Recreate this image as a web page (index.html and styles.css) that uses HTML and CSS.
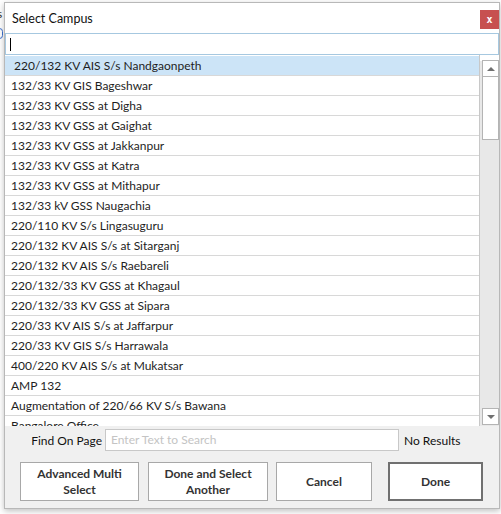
FILE: index.html
```html
<!DOCTYPE html>
<html>
<head>
<meta charset="utf-8">
<link rel="stylesheet" href="styles.css">
</head>
<body>
<div class="behind">
  <span class="behind-s">s</span>
  <span class="behind-c"></span>
</div>
<div class="dialog">
  <div class="titlebar">
    <span class="title">Select Campus</span>
    <button class="close">x</button>
  </div>
  <div class="search"><span class="caret"></span></div>
  <div class="list">
    <div class="rows">
      <div class="row selected">&nbsp;220/132 KV AIS S/s Nandgaonpeth</div>
      <div class="row">132/33 KV GIS Bageshwar</div>
      <div class="row">132/33 KV GSS at Digha</div>
      <div class="row">132/33 KV GSS at Gaighat</div>
      <div class="row">132/33 KV GSS at Jakkanpur</div>
      <div class="row">132/33 KV GSS at Katra</div>
      <div class="row">132/33 KV GSS at Mithapur</div>
      <div class="row">132/33 kV GSS Naugachia</div>
      <div class="row">220/110 KV S/s Lingasuguru</div>
      <div class="row">220/132 KV AIS S/s at Sitarganj</div>
      <div class="row">220/132 KV AIS S/s Raebareli</div>
      <div class="row">220/132/33 KV GSS at Khagaul</div>
      <div class="row">220/132/33 KV GSS at Sipara</div>
      <div class="row">220/33 KV AIS S/s at Jaffarpur</div>
      <div class="row">220/33 KV GIS S/s Harrawala</div>
      <div class="row">400/220 KV AIS S/s at Mukatsar</div>
      <div class="row">AMP 132</div>
      <div class="row">Augmentation of 220/66 KV S/s Bawana</div>
      <div class="row">Bangalore Office</div>
    </div>
    <div class="scrollbar">
      <div class="sb-btn"><span class="tri-up"></span></div>
      <div class="sb-track"><div class="sb-thumb"></div></div>
      <div class="sb-btn"><span class="tri-down"></span></div>
    </div>
  </div>
  <div class="footer">
    <div class="find">
      <span class="find-label">Find On Page</span>
      <div class="find-input">Enter Text to Search</div>
      <span class="find-result">No Results</span>
    </div>
    <div class="buttons">
      <button class="btn b1">Advanced Multi<br>Select</button>
      <button class="btn b2">Done and Select<br>Another</button>
      <button class="btn b3">Cancel</button>
      <button class="btn b4 primary">Done</button>
    </div>
  </div>
</div>
</body>
</html>
```
FILE: styles.css
```css
* { box-sizing: border-box; }
html, body { margin: 0; padding: 0; }
body {
  width: 501px;
  height: 514px;
  background: #ffffff;
  font-family: "Segoe UI", Lato, "Noto Sans", sans-serif;
  font-size: 12px;
  color: #1e1e1e;
  position: relative;
  overflow: hidden;
  padding: 2px 0 0 4px;
}
.behind { position: absolute; left: 0; top: 0; width: 5px; height: 514px; }
.behind-s { position: absolute; left: -3px; top: 6px; font-size: 12px; color: #333; }
.behind-c { position: absolute; left: -4px; top: 28px; width: 7px; height: 11px; border: 1px solid #3a6fd0; border-radius: 4px; }
.dialog {
  position: relative;
  width: 496px;
  height: 507px;
  border: 1px solid #b8b8b8;
  background: #fff;
  box-shadow: 0 2px 6px rgba(0,0,0,0.25);
  display: flex;
  flex-direction: column;
}
.titlebar {
  height: 30px;
  display: flex;
  justify-content: space-between;
  align-items: flex-start;
  padding-left: 7px;
}
.title {
  font-size: 12.5px;
  color: #111;
  margin-top: 8px;
}
.close {
  width: 19px;
  height: 19px;
  margin-top: 7px;
  margin-right: 0;
  border: none;
  background: #c75050;
  color: #fff;
  font-family: "DejaVu Sans Mono", monospace;
  font-weight: bold;
  font-size: 10px;
  line-height: 17px;
  padding: 0;
  text-align: center;
}
.search {
  height: 22px;
  border: 1px solid #a6c8e0;
  background: #fff;
  display: flex;
  align-items: center;
  padding-left: 4px;
}
.caret { width: 1px; height: 13px; background: #000; }
.list {
  height: 371px;
  display: flex;
  background: #fff;
  overflow: hidden;
}
.rows {
  width: 475px;
  border-right: 1px solid #c8c8c8;
  padding-top: 1px;
  overflow: hidden;
}
.row {
  height: 20px;
  border-bottom: 1px solid #d8d8d8;
  padding-left: 6px;
  line-height: 19px;
  white-space: pre;
  color: #1e1e1e;
}
.row.selected { background: #cce4f7; }
.scrollbar {
  width: 19px;
  padding: 5px 0 1px 2px;
  background: linear-gradient(#fff 0, #fff 6px, #e8e8e8 6px);
  display: flex;
  flex-direction: column;
}
.sb-btn {
  height: 17px;
  border: 1px solid #b4b4b4;
  background: #fff;
  display: flex;
  align-items: center;
  justify-content: center;
}
.sb-track { flex: 1; display: flex; flex-direction: column; }
.sb-thumb {
  height: 63px;
  border: 1px solid #b4b4b4;
  border-top: none;
  background: #fff;
}
.tri-up { width: 0; height: 0; border-left: 4px solid transparent; border-right: 4px solid transparent; border-bottom: 4px solid #707070; }
.tri-down { width: 0; height: 0; border-left: 4px solid transparent; border-right: 4px solid transparent; border-top: 4px solid #707070; }
.footer {
  flex: 1;
  background: #f0f0f0;
  padding-top: 3px;
}
.find {
  display: flex;
  align-items: center;
  height: 22px;
}
.find-label {
  color: #111;
  width: 100px;
  flex-shrink: 0;
  text-align: right;
  white-space: nowrap;
  padding-right: 3px;
}
.find-input {
  width: 294px;
  height: 22px;
  border: 1px solid #c8c8c8;
  background: #fff;
  color: #c4c4c4;
  padding-left: 5px;
  line-height: 20px;
}
.find-result { margin-left: 5px; color: #111; white-space: nowrap; }
.buttons {
  display: flex;
  margin-top: 11px;
  padding-left: 15px;
}
.btn {
  height: 39px;
  background: #fff;
  border: 1px solid #a8a8a8;
  font-family: "Segoe UI", Lato, "Noto Sans", sans-serif;
  font-weight: bold;
  font-size: 12px;
  color: #333;
  line-height: 16px;
  padding: 0;
}
.b1 { width: 119px; }
.b2 { width: 120px; margin-left: 9px; }
.b3 { width: 96px; margin-left: 8px; }
.b4 { width: 95px; margin-left: 16px; }
.primary { border: 2px solid #707070; }
```
